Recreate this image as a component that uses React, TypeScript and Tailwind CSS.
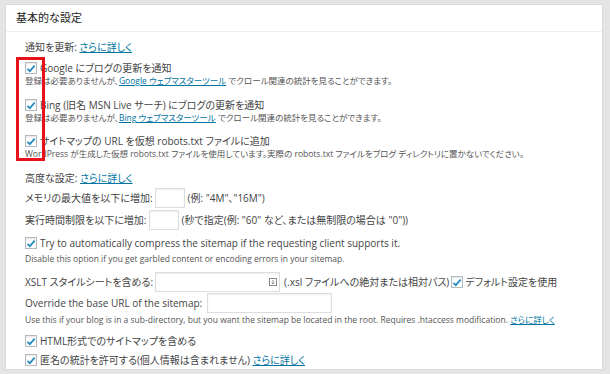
import React from "react";

const font = { fontFamily: '"Open Sans", "Noto Sans CJK JP", sans-serif' };

const Check = () => (
  <span className="inline-flex h-[12px] w-[12px] shrink-0 items-center justify-center border border-[#b4b9be] bg-white shadow-[inset_0_1px_2px_rgba(0,0,0,0.1)]">
    <svg viewBox="0 0 12 12" className="h-[11px] w-[11px]">
      <path d="M1.8 6.4 L4.6 9.2 L10.4 2.6" fill="none" stroke="#1e8cbe" strokeWidth="2" />
    </svg>
  </span>
);

const Link = ({ children }: { children: React.ReactNode }) => (
  <span className="text-[#0074a2] underline">{children}</span>
);

const Box = ({ w }: { w: string }) => (
  <span className={`inline-block h-[20px] ${w} shrink-0 border border-[#dddddd] bg-white shadow-[inset_0_1px_2px_rgba(0,0,0,0.07)]`} />
);

export default function App() {
  return (
    <div
      className="relative h-[374px] w-[610px] overflow-hidden bg-[#e4e4e4] pl-[5px] pr-[7px] pt-[4px] [font-feature-settings:'palt']"
      style={font}
    >
      <div className="h-[366px] border border-[#dadada] bg-white">
        <div className="flex h-[27px] items-center border-b border-[#eeeeee] pl-[10px] text-[11px] text-[#222] [font-feature-settings:normal]">
          基本的な設定
        </div>
        <div className="flex flex-col pl-[19px] pt-[7px] text-[10px] leading-none text-[#444]">
          <div className="flex h-[16px] items-center">
            通知を更新:&nbsp;<Link>さらに詳しく</Link>
          </div>
          <div className="mt-[6px] flex h-[14px] items-center gap-[3px]">
            <Check />
            <span>Google にブログの更新を通知</span>
          </div>
          <div className="flex h-[13px] items-center text-[8.5px] text-[#555]">
            登録は必要ありませんが、<Link>Google ウェブマスターツール</Link>&nbsp;でクロール関連の統計を見ることができます。
          </div>
          <div className="mt-[10px] flex h-[14px] items-center gap-[3px]">
            <Check />
            <span>Bing (旧名 MSN Live サーチ) にブログの更新を通知</span>
          </div>
          <div className="flex h-[13px] items-center text-[8.5px] text-[#555]">
            登録は必要ありませんが、<Link>Bing ウェブマスターツール</Link>&nbsp;でクロール関連の統計を見ることができます。
          </div>
          <div className="mt-[9px] flex h-[14px] items-center gap-[3px]">
            <Check />
            <span>サイトマップの URL を仮想 robots.txt ファイルに追加</span>
          </div>
          <div className="flex h-[13px] items-center text-[8.5px] text-[#555]">
            WordPress が生成した仮想 robots.txt ファイルを使用しています。実際の robots.txt ファイルをブログ ディレクトリに置かないでください。
          </div>
          <div className="mt-[9px] flex h-[16px] items-center">
            高度な設定:&nbsp;<Link>さらに詳しく</Link>
          </div>
          <div className="mt-[2px] flex h-[20px] items-center">
            <span>メモリの最大値を以下に増加:</span>
            <span className="ml-[2px]"><Box w="w-[30px]" /></span>
            <span className="ml-[3px]">(例: "4M"、"16M")</span>
          </div>
          <div className="mt-[2px] flex h-[20px] items-center">
            <span>実行時間制限を以下に増加:</span>
            <span className="ml-[2px]"><Box w="w-[30px]" /></span>
            <span className="ml-[3px]">(秒で指定(例: "60" など、または無制限の場合は "0"))</span>
          </div>
          <div className="mt-[6px] flex h-[14px] items-center gap-[3px]">
            <Check />
            <span>Try to automatically compress the sitemap if the requesting client supports it.</span>
          </div>
          <div className="mt-[3px] flex h-[13px] items-center text-[8.5px] text-[#555]">
            Disable this option if you get garbled content or encoding errors in your sitemap.
          </div>
          <div className="mt-[6px] flex h-[20px] items-center">
            <span>XSLT スタイルシートを含める:</span>
            <span className="relative ml-[2px] inline-flex h-[20px] w-[125px] items-center justify-end border border-[#dddddd] bg-white pr-[2px] shadow-[inset_0_1px_2px_rgba(0,0,0,0.07)]">
              <svg viewBox="0 0 8 8" className="h-[8px] w-[8px]">
                <rect x="0.5" y="0.5" width="7" height="7" fill="none" stroke="#888" />
                <path d="M4 2 V5.5 M2.5 4.5 L4 6 L5.5 4.5" fill="none" stroke="#888" strokeWidth="0.9" />
              </svg>
            </span>
            <span className="ml-[4px]">(.xsl ファイルへの絶対または相対パス)</span>
            <span className="ml-[2px] flex items-center gap-[2px]">
              <Check />
              <span>デフォルト設定を使用</span>
            </span>
          </div>
          <div className="mt-[1px] flex h-[20px] items-center">
            <span>Override the base URL of the sitemap:</span>
            <span className="ml-[5px]"><Box w="w-[125px]" /></span>
          </div>
          <div className="mt-[1px] flex h-[13px] items-center text-[8.5px] text-[#555]">
            Use this if your blog is in a sub-directory, but you want the sitemap be located in the root. Requires .htaccess modification.&nbsp;<Link>さらに詳しく</Link>
          </div>
          <div className="mt-[7px] flex h-[14px] items-center gap-[3px]">
            <Check />
            <span>HTML形式でのサイトマップを含める</span>
          </div>
          <div className="mt-[5px] flex h-[14px] items-center gap-[3px]">
            <Check />
            <span>匿名の統計を許可する(個人情報は含まれません)&nbsp;<Link>さらに詳しく</Link></span>
          </div>
        </div>
      </div>
      <div className="absolute left-[16px] top-[57px] h-[104px] w-[29px] border-[3px] border-[#e8111a]" />
    </div>
  );
}
